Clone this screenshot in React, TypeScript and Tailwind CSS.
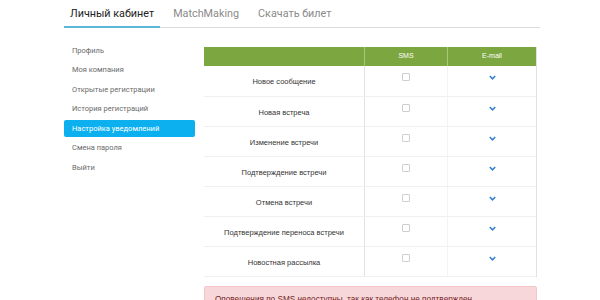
import { useState } from 'react';

const menu = [
    'Профиль',
    'Моя компания',
    'Открытые регистрации',
    'История регистраций',
    'Настройка уведомлений',
    'Смена пароля',
    'Выйти',
];

const events = [
    'Новое сообщение',
    'Новая встреча',
    'Изменение встречи',
    'Подтверждение встречи',
    'Отмена встречи',
    'Подтверждение переноса встречи',
    'Новостная рассылка',
];

function Check() {
    return (
        <svg width="7" height="5" viewBox="0 0 7 5" className="block">
            <path d="M0.8 1 L3.5 3.8 L6.2 1" fill="none" stroke="#2f7fd1" strokeWidth="1.5" />
        </svg>
    );
}

export default function App() {
    const [active] = useState(4);

    return (
        <div className="w-[600px] h-[300px] overflow-hidden bg-white font-['Roboto',sans-serif]">
            <div className="ml-[64px] w-[476px]">
                <div className="flex gap-[7px] border-b border-[#dcdcdc] text-[10.8px] h-[28px]">
                    <div className="px-[6px] pt-[6px] text-[#222] border-b-2 border-[#5bb8d4] -mb-px">Личный кабинет</div>
                    <div className="px-[6px] pt-[6px] text-[#8a8a8a]">MatchMaking</div>
                    <div className="px-[6px] pt-[6px] text-[#8a8a8a]">Скачать билет</div>
                </div>

                <div className="flex gap-[9px]">
                    <div className="w-[131px] pt-[14px] flex flex-col gap-[2.5px] text-[7.5px]">
                        {menu.map((m, i) => (
                            <div
                                key={m}
                                className={
                                    i === active
                                        ? 'h-[17px] flex items-center px-[8px] rounded-[2px] bg-[#0db0ef] text-white'
                                        : 'h-[17px] flex items-center px-[8px] text-[#6a6a6a]'
                                }
                            >
                                {m}
                            </div>
                        ))}
                    </div>

                    <div className="w-[333px] pt-[19px] font-['Liberation_Sans',Arial,sans-serif]">
                        <div className="border-r border-[#e2e2e2]">
                            <div className="flex h-[19px] bg-[#7ba640] text-white text-[7px]">
                                <div className="w-[161px] border-r border-[#a9c57f]"></div>
                                <div className="w-[83px] border-r border-[#a9c57f] flex items-center justify-center">SMS</div>
                                <div className="flex-1 flex items-center justify-center">E-mail</div>
                            </div>
                            {events.map((e, i) => (
                                <div key={e} className={(i === 0 ? 'h-[31px] ' : 'h-[30px] ') + 'flex border-b border-[#f0f0f0] text-[7.5px] text-[#333]'}>
                                    <div className="w-[161px] border-r border-[#e2e2e2] flex items-center justify-center pt-[2px]">{e}</div>
                                    <div className="w-[83px] border-r border-[#f3f3f3] flex justify-center pt-[7px]">
                                        <div className="w-[8px] h-[8px] border border-[#cfcfcf] rounded-[1px] bg-white"></div>
                                    </div>
                                    <div className="flex-1 flex justify-center pt-[9px]">
                                        <Check />
                                    </div>
                                </div>
                            ))}
                        </div>

                        <div className="mt-[9px] bg-[#f8d7da] border border-[#f5c6cb] rounded-[2px] px-[10px] py-[7px] text-[8.2px] text-[#721c24]">
                            Оповещения по SMS недоступны, так как телефон не подтвержден
                        </div>
                    </div>
                </div>
            </div>
        </div>
    );
}
